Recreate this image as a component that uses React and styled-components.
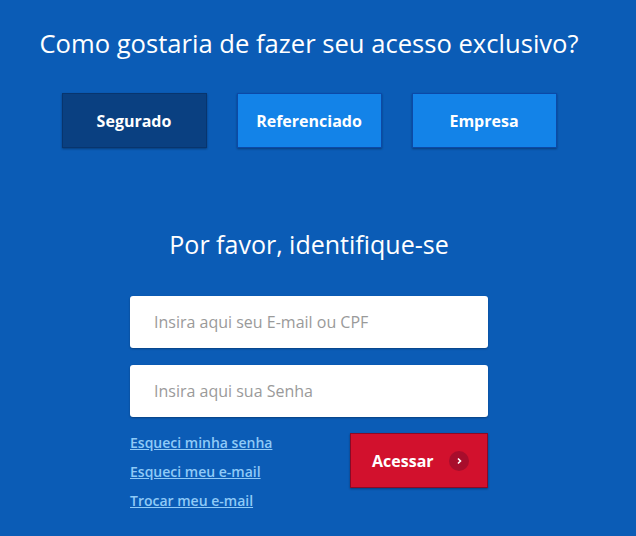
import React from "react";
import styled, { createGlobalStyle } from "styled-components";

const Global = createGlobalStyle`
  html, body {
    margin: 0;
    padding: 0;
    background: #0b5cb6;
  }
  body {
    font-family: "Open Sans", "Liberation Sans", sans-serif;
  }
`;

const Page = styled.div`
  width: 618px;
  height: 536px;
  background: #0b5cb6;
  display: flex;
  flex-direction: column;
  align-items: center;
  overflow: hidden;
`;

const Title = styled.h1`
  margin: 26px 0 0;
  color: #ffffff;
  font-size: 25.6px;
  font-weight: 400;
  line-height: 35px;
`;

const Choices = styled.div`
  display: flex;
  gap: 30px;
  margin-top: 32px;
`;

const Choice = styled.button`
  width: 145px;
  height: 55px;
  border: 1px solid ${(p) => (p.active ? "#08356e" : "#0b49a8")};
  background: ${(p) => (p.active ? "#0a4081" : "#1383e8")};
  color: #ffffff;
  font-family: "Open Sans", "Liberation Sans", sans-serif;
  font-weight: 700;
  font-size: 16px;
  box-shadow: 0 1px 2px rgba(0, 0, 0, 0.35);
  cursor: pointer;
`;

const Subtitle = styled.h2`
  margin: 79px 0 0;
  color: #ffffff;
  font-size: 25px;
  font-weight: 400;
  line-height: 34px;
`;

const Form = styled.div`
  width: 358px;
  margin-top: 35px;
  display: flex;
  flex-direction: column;
  gap: 17px;
`;

const Input = styled.input`
  box-sizing: border-box;
  width: 100%;
  height: 52px;
  border: none;
  border-radius: 3px;
  background: #ffffff;
  padding: 0 24px;
  font-family: "Open Sans", "Liberation Sans", sans-serif;
  font-size: 16px;
  color: #333;
  box-shadow: 0 1px 2px rgba(0, 0, 0, 0.3);
  &::placeholder {
    color: #9a9a9a;
  }
`;

const Bottom = styled.div`
  display: flex;
  justify-content: space-between;
  align-items: flex-start;
  margin-top: -1px;
`;

const Links = styled.div`
  display: flex;
  flex-direction: column;
  gap: 9px;
`;

const Link = styled.a`
  color: #8fcaf7;
  font-size: 14px;
  font-weight: 600;
  line-height: 20px;
  text-decoration: underline;
  cursor: pointer;
`;

const Submit = styled.button`
  box-sizing: border-box;
  width: 138px;
  height: 55px;
  border: 1px solid #8a0a26;
  background: #d2112d;
  color: #ffffff;
  font-family: "Open Sans", "Liberation Sans", sans-serif;
  font-weight: 700;
  font-size: 16px;
  display: flex;
  align-items: center;
  padding: 0 0 0 21px;
  gap: 15px;
  box-shadow: 0 1px 2px rgba(0, 0, 0, 0.35);
  cursor: pointer;
`;

const Arrow = styled.span`
  width: 20px;
  height: 20px;
  border-radius: 50%;
  background: #a80d2c;
  display: flex;
  align-items: center;
  justify-content: center;
`;

export default function App() {
  return (
    <>
      <Global />
      <Page>
        <Title>Como gostaria de fazer seu acesso exclusivo?</Title>
        <Choices>
          <Choice active>Segurado</Choice>
          <Choice>Referenciado</Choice>
          <Choice>Empresa</Choice>
        </Choices>
        <Subtitle>Por favor, identifique-se</Subtitle>
        <Form>
          <Input placeholder="Insira aqui seu E-mail ou CPF" />
          <Input type="password" placeholder="Insira aqui sua Senha" />
          <Bottom>
            <Links>
              <Link>Esqueci minha senha</Link>
              <Link>Esqueci meu e-mail</Link>
              <Link>Trocar meu e-mail</Link>
            </Links>
            <Submit>
              Acessar
              <Arrow>
                <svg width="8" height="8" viewBox="0 0 8 8">
                  <path d="M3 1.5 L5.5 4 L3 6.5" fill="none" stroke="#fff" strokeWidth="1.6" />
                </svg>
              </Arrow>
            </Submit>
          </Bottom>
        </Form>
      </Page>
    </>
  );
}
